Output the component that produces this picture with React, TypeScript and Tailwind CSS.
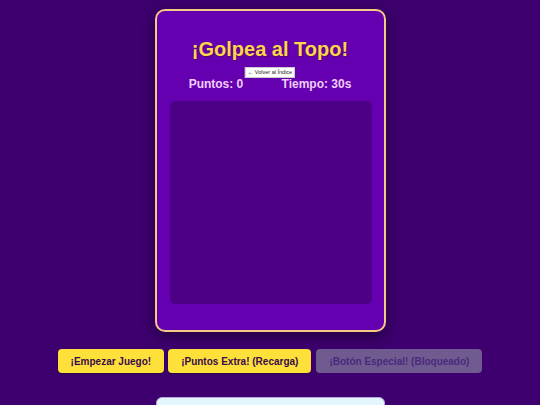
export default function App() {
  return (
    <div
      className="min-h-[405px] w-full bg-[#3d006e] flex flex-col items-center pt-[9px] overflow-hidden"
      style={{ fontFamily: '"Liberation Sans", Arial, sans-serif' }}
    >
      {/* tarjeta principal del juego */}
      <div className="relative w-[231px] rounded-[10px] border-2 border-[#f6c987] bg-[#6500b0] px-[13px] pt-[25px] pb-[26px] shadow-[0_4px_14px_rgba(0,0,0,0.45)]">
        <h1 className="text-center text-[20px] font-bold leading-[26px] text-[#fdd64f] [text-shadow:1px_1px_1px_rgba(80,0,60,0.6)]">
          ¡Golpea al Topo!
        </h1>

        <button className="absolute left-1/2 top-[56px] -translate-x-1/2 bg-white px-[2px] text-[5.5px] leading-[9px] text-[#222] border border-[#ccc] whitespace-nowrap">
          ← Volver al Índice
        </button>

        <div className="mt-[15px] flex justify-around text-[12px] font-bold leading-[14px] text-[#f2cdfd]">
          <span>Puntos: 0</span>
          <span>Tiempo: 30s</span>
        </div>

        {/* tablero de los topos */}
        <div className="mt-[10px] h-[203px] w-[202px] rounded-[5px] bg-[#4b0085]" />
      </div>

      <div className="mt-[17px] flex gap-[4px] text-[10px] font-bold">
        <button className="h-[24px] rounded-[4px] bg-[#fde13a] px-[13px] text-[#3b0a4a] shadow-[0_1px_2px_rgba(0,0,0,0.4)]">
          ¡Empezar Juego!
        </button>
        <button className="h-[24px] rounded-[4px] bg-[#fde13a] px-[13px] text-[#3b0a4a] shadow-[0_1px_2px_rgba(0,0,0,0.4)]">
          ¡Puntos Extra! (Recarga)
        </button>
        <button
          disabled
          className="ml-[1px] h-[24px] rounded-[4px] bg-[#6f5b8f] px-[13px] text-[#4a2a7c]"
        >
          ¡Botón Especial! (Bloqueado)
        </button>
      </div>

      {/* panel inferior */}
      <div className="mt-[24px] h-[40px] w-[229px] rounded-t-[6px] border border-[#b9a6e0] bg-[#e3f6fd]" />
    </div>
  )
}
